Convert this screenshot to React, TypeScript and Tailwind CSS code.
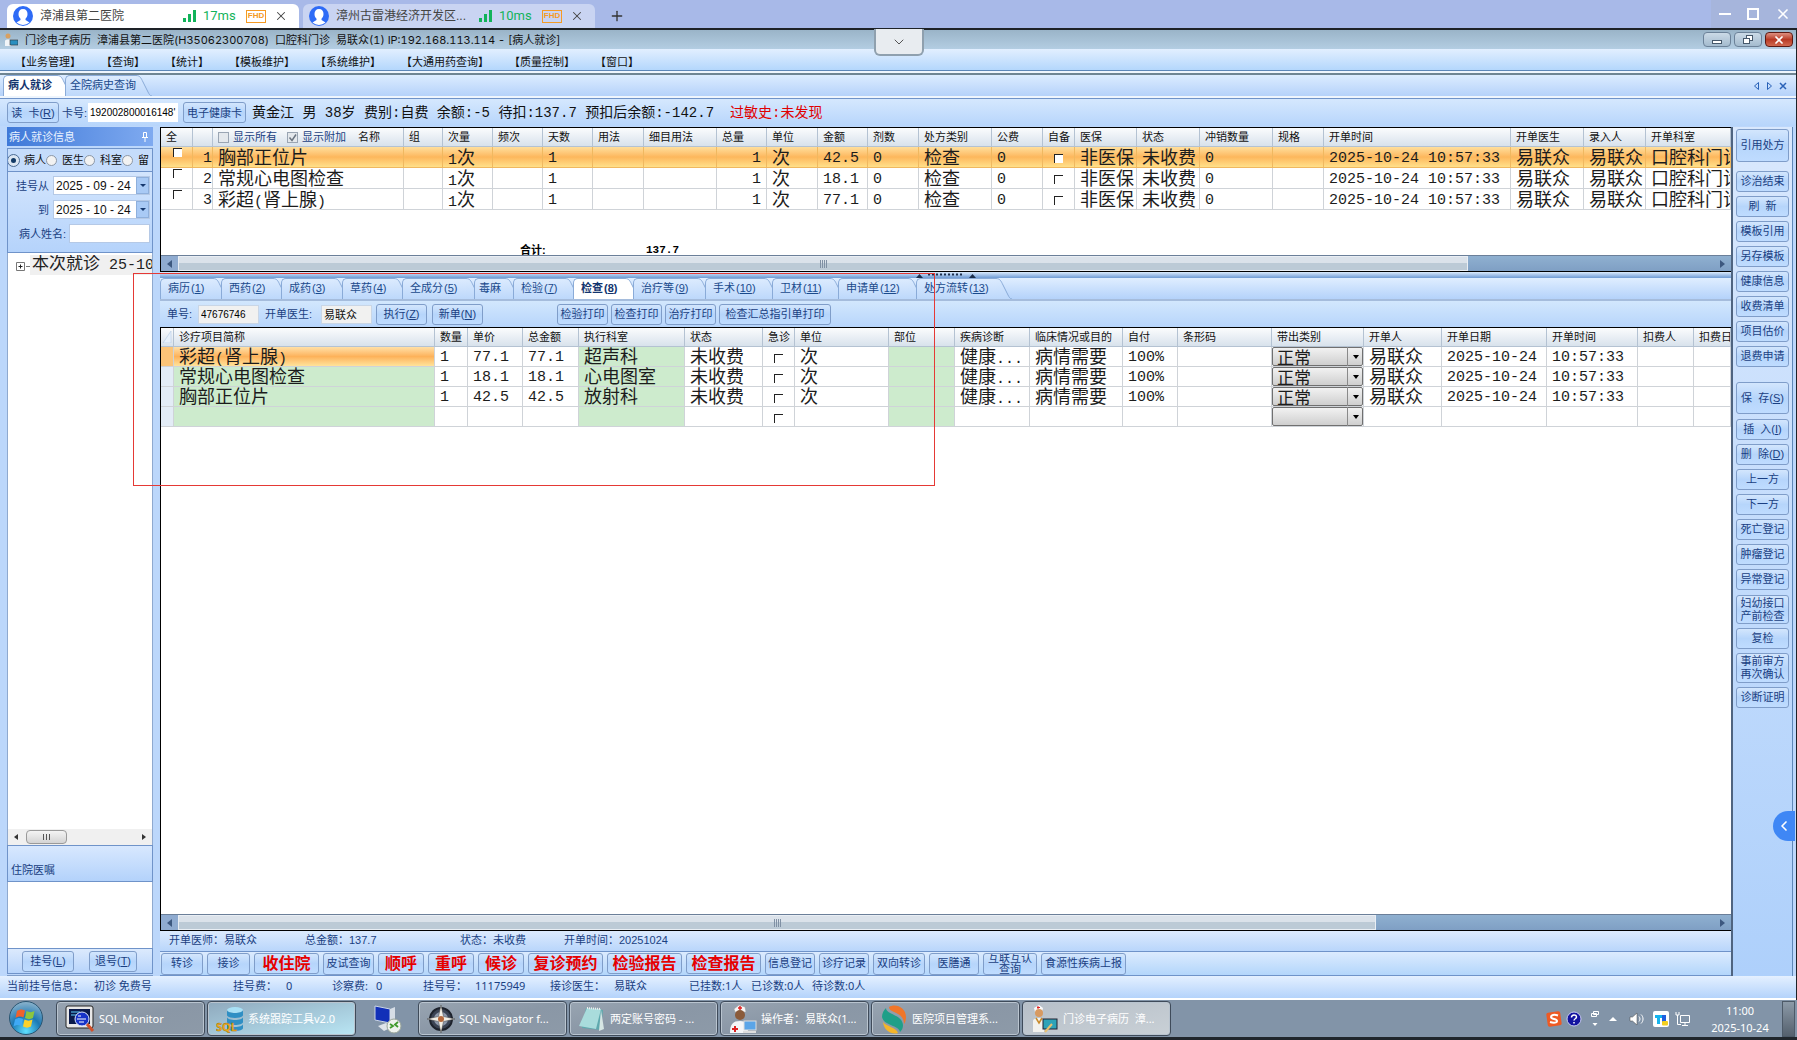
import type { ReactNode } from 'react'
import { ChevronDown, ChevronLeft, Plus, X } from 'lucide-react'
import clsx from 'clsx'

const MENU = ['业务管理', '查询', '统计', '模板维护', '系统维护', '大通用药查询', '质量控制', '窗口']

const ORDER_COLS = [
  { label: '全', w: 'w-[32px]' },
  { label: '', w: 'w-[20px]' },
  { label: '名称', w: 'w-[191px]' },
  { label: '组', w: 'w-[39px]' },
  { label: '次量', w: 'w-[50px]' },
  { label: '频次', w: 'w-[50px]' },
  { label: '天数', w: 'w-[50px]' },
  { label: '用法', w: 'w-[51px]' },
  { label: '细目用法', w: 'w-[73px]' },
  { label: '总量', w: 'w-[50px]' },
  { label: '单位', w: 'w-[51px]' },
  { label: '金额', w: 'w-[50px]' },
  { label: '剂数', w: 'w-[51px]' },
  { label: '处方类别', w: 'w-[73px]' },
  { label: '公费', w: 'w-[51px]' },
  { label: '自备', w: 'w-[32px]' },
  { label: '医保', w: 'w-[62px]' },
  { label: '状态', w: 'w-[63px]' },
  { label: '冲销数量', w: 'w-[73px]' },
  { label: '规格', w: 'w-[51px]' },
  { label: '开单时间', w: 'w-[187px]' },
  { label: '开单医生', w: 'w-[73px]' },
  { label: '录入人', w: 'w-[62px]' },
  { label: '开单科室', w: '' },
]

const ORDERS = [
  { name: '胸部正位片', price: '42.5' },
  { name: '常规心电图检查', price: '18.1' },
  { name: '彩超(肾上腺)', price: '77.1' },
]

const ITEM_COLS = [
  { label: '', w: 'w-[13px]' },
  { label: '诊疗项目简称', w: 'w-[261px]' },
  { label: '数量', w: 'w-[33px]' },
  { label: '单价', w: 'w-[55px]' },
  { label: '总金额', w: 'w-[56px]' },
  { label: '执行科室', w: 'w-[106px]' },
  { label: '状态', w: 'w-[78px]' },
  { label: '急诊', w: 'w-[32px]' },
  { label: '单位', w: 'w-[94px]' },
  { label: '部位', w: 'w-[66px]' },
  { label: '疾病诊断', w: 'w-[75px]' },
  { label: '临床情况或目的', w: 'w-[93px]' },
  { label: '自付', w: 'w-[55px]' },
  { label: '条形码', w: 'w-[94px]' },
  { label: '带出类别', w: 'w-[92px]' },
  { label: '开单人', w: 'w-[78px]' },
  { label: '开单日期', w: 'w-[105px]' },
  { label: '开单时间', w: 'w-[91px]' },
  { label: '扣费人', w: 'w-[56px]' },
  { label: '扣费日期', w: '' },
]

const ITEMS = [
  { name: '彩超(肾上腺)', price: '77.1', dept: '超声科' },
  { name: '常规心电图检查', price: '18.1', dept: '心电图室' },
  { name: '胸部正位片', price: '42.5', dept: '放射科' },
  null,
]

const TABS = [
  { label: '病历', k: '1', w: 'w-[61px]' },
  { label: '西药', k: '2', w: 'w-[60px]' },
  { label: '成药', k: '3', w: 'w-[61px]' },
  { label: '草药', k: '4', w: 'w-[60px]' },
  { label: '全成分', k: '5', w: 'w-[72px]' },
  { label: '毒麻', k: '', w: 'w-[39px]' },
  { label: '检验', k: '7', w: 'w-[60px]' },
  { label: '检查', k: '8', w: 'w-[60px]' },
  { label: '治疗等', k: '9', w: 'w-[72px]' },
  { label: '手术', k: '10', w: 'w-[67px]' },
  { label: '卫材', k: '11', w: 'w-[66px]' },
  { label: '申请单', k: '12', w: 'w-[78px]' },
  { label: '处方流转', k: '13', w: 'w-[88px]' },
]

const ACTIONS = [
  { label: '转诊', w: 'w-[42px]' },
  { label: '接诊', w: 'w-[43px]' },
  { label: '收住院', w: 'w-[65px]', hot: true },
  { label: '皮试查询', w: 'w-[51px]' },
  { label: '顺呼', w: 'w-[46px]', hot: true },
  { label: '重呼', w: 'w-[46px]', hot: true },
  { label: '候诊', w: 'w-[46px]', hot: true },
  { label: '复诊预约', w: 'w-[75px]', hot: true },
  { label: '检验报告', w: 'w-[75px]', hot: true },
  { label: '检查报告', w: 'w-[75px]', hot: true },
  { label: '信息登记', w: 'w-[50px]' },
  { label: '诊疗记录', w: 'w-[50px]' },
  { label: '双向转诊', w: 'w-[52px]' },
  { label: '医膳通', w: 'w-[50px]' },
  { label: '互联互认\n查询', w: 'w-[54px]' },
  { label: '食源性疾病上报', w: 'w-[85px]' },
]

const SIDE: { label: ReactNode; cls: string }[] = [
  { label: '引用处方', cls: 'h-[33px] mb-[9px]' },
  { label: '诊治结束', cls: 'h-[21px] mb-1' },
  { label: '刷  新', cls: 'h-[21px] mb-1' },
  { label: '模板引用', cls: 'h-[21px] mb-1' },
  { label: '另存模板', cls: 'h-[21px] mb-1' },
  { label: '健康信息', cls: 'h-[21px] mb-1' },
  { label: '收费清单', cls: 'h-[21px] mb-1' },
  { label: '项目估价', cls: 'h-[21px] mb-1' },
  { label: '退费申请', cls: 'h-[21px] mb-[15px]' },
  { label: <>保  存<Key k="S" /></>, cls: 'h-[32px] mb-[5px]' },
  { label: <>插  入<Key k="I" /></>, cls: 'h-[21px] mb-1' },
  { label: <>删  除<Key k="D" /></>, cls: 'h-[21px] mb-1' },
  { label: '上一方', cls: 'h-[21px] mb-1' },
  { label: '下一方', cls: 'h-[21px] mb-1' },
  { label: '死亡登记', cls: 'h-[21px] mb-1' },
  { label: '肿瘤登记', cls: 'h-[21px] mb-1' },
  { label: '异常登记', cls: 'h-[21px] mb-[5px]' },
  { label: '妇幼接口\n产前检查', cls: 'h-[29px] mb-1' },
  { label: '复检', cls: 'h-[21px] mb-1' },
  { label: '事前审方\n再次确认', cls: 'h-[30px] mb-1' },
  { label: '诊断证明', cls: 'h-[21px]' },
]

function Key({ k }: { k: string }) {
  return (
    <span>
      (<u>{k}</u>)
    </span>
  )
}

/* grid text: latin runs are set a little smaller than the hanzi */
function Mix({ t }: { t?: string }) {
  if (!t) return null
  return (
    <>
      {t.split(/([\x20-\x7e]+)/).map((part, i) =>
        i % 2 ? <span key={i} className="text-[15px] leading-[0px]">{part}</span> : part,
      )}
    </>
  )
}

function Btn({ className, children }: { className?: string; children: ReactNode }) {
  return (
    <button
      type="button"
      className={clsx(
        'flex shrink-0 items-center justify-center overflow-hidden rounded-[3px] border border-[#7f9dc9] bg-gradient-to-b from-[#d3e6fd] via-[#b6d5fb] to-[#bfdcff] whitespace-pre text-[#1a3f82]',
        className,
      )}
    >
      {children}
    </button>
  )
}

function Check({ label }: { label: string }) {
  return (
    <input
      type="checkbox"
      aria-label={label}
      className="block size-[9px] appearance-none border-t border-l border-[#222] bg-white"
    />
  )
}

function SlantTab({ w, active, small, children }: { w: string; active?: boolean; small?: boolean; children: ReactNode }) {
  return (
    <button
      type="button"
      role="tab"
      aria-selected={!!active}
      className={clsx('flex h-[21px] shrink-0 text-[#1a4a8c]', w, active && 'font-bold text-[#12346e]')}
    >
      <span
        className={clsx(
          'flex h-full flex-1 items-center rounded-tl-[5px] border-t border-l border-[#8aabd8] pb-0.5 whitespace-nowrap',
          small ? 'pl-[4px]' : 'pl-[7px]',
          active ? 'bg-white' : 'bg-gradient-to-b from-[#dcebfe] to-[#bdd8fb]',
        )}
      >
        {children}
      </span>
      <svg viewBox="0 0 16 21" className="-mr-2 h-[21px] w-4 shrink-0" aria-hidden>
        <defs>
          <linearGradient id="slant" x1="0" y1="0" x2="0" y2="1">
            <stop offset="0" stopColor="#dcebfe" />
            <stop offset="1" stopColor="#bdd8fb" />
          </linearGradient>
        </defs>
        <path d="M0 0.5C4 0.5 5 3 7 7l5 10c1 2 2 4 4 4H0z" fill={active ? '#fff' : 'url(#slant)'} />
        <path d="M0 0.5C4 0.5 5 3 7 7l5 10c1 2 2 4 4 4" fill="none" stroke="#8aabd8" />
      </svg>
    </button>
  )
}

function HScroll({ thumb }: { thumb: string }) {
  return (
    <div className="flex h-4 shrink-0 border-t border-[#6b7f99] bg-gradient-to-b from-[#8fb0d0] to-[#7f9fc4]">
      <div className="flex w-[17px] items-center justify-center bg-[#8fabd0]">
        <span className="border-y-4 border-r-[5px] border-y-transparent border-r-[#3d587f]" />
      </div>
      <div className="flex flex-1">
        <div
          className={clsx(
            'flex items-center justify-center gap-px border border-[#e9eef4] bg-gradient-to-b from-[#dbe2ea] from-50% to-[#bccad6] to-50%',
            thumb,
          )}
        >
          {[0, 1, 2, 3].map(i => (
            <span key={i} className="h-2 w-px bg-[#8090a4]" />
          ))}
        </div>
      </div>
      <div className="flex w-[17px] items-center justify-center">
        <span className="border-y-4 border-l-[5px] border-y-transparent border-l-[#3d587f]" />
      </div>
    </div>
  )
}

/* remote-desktop client tabs */
function SessionTab({ name, ms, active }: { name: string; ms: string; active?: boolean }) {
  return (
    <div
      className={clsx(
        'mr-1 flex h-6 w-[292px] items-center rounded-t-md pl-1.5 text-xs text-[#444]',
        active ? 'bg-white' : 'bg-[#c9d4f2]',
      )}
    >
      <svg viewBox="0 0 20 20" className="size-5">
        <circle cx="10" cy="10" r="10" fill="#2e6bf6" />
        <path d="M10 3c3 0 4.500 2 4.500 5 0 2-.8 3.700-2 4.700v1.300l4 2.500A10 10 0 0 1 3.500 16.500l4-2.500v-1.300c-1.200-1-2-2.700-2-4.700 0-3 1.500-5 4.500-5z" fill="#fff" />
      </svg>
      <span className="ml-[7px] w-[143px] whitespace-nowrap">{name}</span>
      <svg viewBox="0 0 14 12" className="h-3 w-3.5" fill="#12b35a">
        <path d="M0 8h3v4H0zM5 4h3v8H5zM10 0h3v12h-3z" />
      </svg>
      <span className="ml-1.5 w-[43px] font-[Roboto] text-[13px] text-[#12b35a]">{ms}</span>
      <span className="flex h-[13px] w-5 items-center justify-center border border-[#f59a23] text-[8px] leading-none font-bold text-[#f59a23]">
        FHD
      </span>
      <button type="button" aria-label="关闭" className="ml-2">
        <X className="size-3.5" strokeWidth={1.8} />
      </button>
    </div>
  )
}

function TitleBar() {
  return (
    <header className="flex h-[19px] shrink-0 items-center bg-gradient-to-b from-[#9ab4c8] to-[#b3cde2] pl-1">
      <svg viewBox="0 0 14 14" className="size-3.5">
        <circle cx="4" cy="3" r="2.500" fill="#d8a060" />
        <path d="M1 13V8c0-2 6-2 6 0v5z" fill="#f2f5f8" />
        <rect x="6" y="7" width="8" height="5" fill="#2a8fc0" stroke="#333" strokeWidth=".6" />
      </svg>
      <h1 className="ml-[7px] flex-1 whitespace-pre text-[11px] tabular-nums text-[#111] [font-family:'Inter','Noto_Sans_CJK_SC',sans-serif]">
        {'门诊电子病历  漳浦县第二医院(H35062300708)  口腔科门诊  易联众(1) IP:192.168.113.114 - [病人就诊]'}
      </h1>
      <div className="flex gap-[3px] pr-[3px]">
        <button type="button" aria-label="最小化" className="flex h-[15px] w-7 items-center justify-center rounded-sm border border-[#6c8299] bg-gradient-to-b from-[#cbdae7] to-[#a4bbce]">
          <span className="mt-1 h-1 w-2.5 border border-[#46586b] bg-white" />
        </button>
        <button type="button" aria-label="还原" className="flex h-[15px] w-7 items-center justify-center rounded-sm border border-[#6c8299] bg-gradient-to-b from-[#cbdae7] to-[#a4bbce]">
          <svg viewBox="0 0 12 10" className="h-2.5 w-3" fill="#fff" stroke="#46586b">
            <rect x="4.500" y=".5" width="6" height="5" />
            <rect x="1.500" y="3.500" width="6" height="5" />
          </svg>
        </button>
        <button type="button" aria-label="关闭窗口" className="flex h-[15px] w-7 items-center justify-center rounded-sm border border-[#5c1a14] bg-gradient-to-b from-[#dd8f80] via-[#b83a25] to-[#d2694f]">
          <X className="size-3 text-white" strokeWidth={3.5} />
        </button>
      </div>
    </header>
  )
}

function PatientPanel() {
  return (
    <aside className="flex w-[146px] shrink-0 flex-col overflow-hidden border-b border-[#7f9dc9] pb-px">
      <h2 className="flex h-[19px] shrink-0 items-center justify-between bg-gradient-to-r from-[#3f79d8] to-[#7faaf0] px-0.5 text-[#eaf3ff]">
        病人就诊信息
        <svg viewBox="0 0 8 10" className="mr-0.5 h-2.5 w-2" stroke="#fff" fill="none">
          <path d="M2.500 0.500h3v5h-3zM1 5.500h6M4 6v4" />
        </svg>
      </h2>
      <fieldset className="mt-0.5 flex h-6 shrink-0 items-center overflow-hidden border border-[#6f93c9] bg-[#c5dcfb] text-[#111]">
        {['病人', '医生', '科室', '留'].map((label, i) => (
          <label key={label} className="flex shrink-0 items-center gap-[5px]">
            <input
              type="radio"
              name="scope"
              defaultChecked={i === 0}
              className="size-[11px] appearance-none rounded-full border border-[#8c97a6] bg-[#f2f2f2] checked:border-[3px] checked:border-[#dbe6f2] checked:bg-[#123a66] checked:outline checked:outline-[#4d6c92]"
            />
            {label}
          </label>
        ))}
      </fieldset>
      <div className="flex h-[81px] shrink-0 flex-col gap-[5px] border-x border-b border-[#6f93c9] bg-gradient-to-b from-[#d3e5fd] to-[#b5d3fb] pt-1 pr-0.5">
        {[
          ['挂号从', '2025 - 09 - 24'],
          ['到', '2025 - 10 - 24'],
        ].map(([label, date]) => (
          <label key={label} className="flex items-center justify-end gap-1 text-[#1a3f82]">
            {label}
            <span className="flex h-[19px] w-[97px] border border-[#b5c9e6] bg-white">
              <input type="text" defaultValue={date} className="w-[82px] pl-0.5 text-xs text-[#111] outline-none" />
              <span className="flex w-[13px] items-center justify-center border border-[#8fb0dc] bg-[#a9caf5]">
                <span className="border-x-[3px] border-t-[3px] border-x-transparent border-t-[#16386e]" />
              </span>
            </span>
          </label>
        ))}
        <label className="flex items-center justify-end gap-[3px] text-[#1a3f82]">
          病人姓名:
          <input type="text" className="h-[19px] w-[81px] border border-[#b5c9e6] bg-white outline-none" />
        </label>
      </div>
      <div className="flex min-h-0 flex-1 flex-col border-x border-[#8fa9cf] bg-white">
        <div className="flex flex-1 items-start pt-0.5 pl-2">
          <svg viewBox="0 0 14 19" className="h-[19px] w-3.5 shrink-0" stroke="#777" fill="none">
            <path d="M.5 7.500h8v8h-8zM10 11.500h4" />
            <path d="M2.500 11.500h4M4.500 9.500v4" stroke="#222" />
          </svg>
          <span className="w-full overflow-hidden bg-[#f0f0f0] pl-0.5 text-[17px] leading-[20px] whitespace-nowrap text-[#222] [font-family:'Liberation_Mono','Noto_Sans_CJK_SC',monospace]">
            <Mix t="本次就诊 25-10" />
          </span>
        </div>
        <div className="flex h-4 items-center bg-[#f0f0f0] px-1.5">
          <span className="border-y-[3px] border-r-4 border-y-transparent border-r-[#333]" />
          <div className="ml-2 flex h-3.5 w-[41px] items-center justify-center gap-0.5 rounded-sm border border-[#9a9a9a] bg-gradient-to-b from-[#f4f4f4] to-[#d4d4d4]">
            <i className="h-1.5 w-px bg-[#555]" />
            <i className="h-1.5 w-px bg-[#555]" />
            <i className="h-1.5 w-px bg-[#555]" />
          </div>
          <span className="ml-auto border-y-[3px] border-l-4 border-y-transparent border-l-[#333]" />
        </div>
      </div>
      <h3 className="flex h-[37px] shrink-0 items-end border border-[#6f93c9] bg-gradient-to-b from-[#d8e8fe] to-[#b3d2fb] pb-1 pl-[3px] text-[#1a3f82]">
        住院医嘱
      </h3>
      <div className="h-[66px] shrink-0 border-x border-[#8fa9cf] bg-white" />
      <div className="flex h-[26px] shrink-0 items-center gap-[15px] border border-[#6f93c9] bg-gradient-to-b from-[#dceafd] to-[#b7d4fb] pl-[14px]">
        <Btn className="h-[21px] w-[52px]">挂号<Key k="L" /></Btn>
        <Btn className="h-[21px] w-[48px]">退号<Key k="T" /></Btn>
      </div>
    </aside>
  )
}

const TH = 'h-[19px] overflow-hidden border-r border-b border-[#b4c2d2] bg-gradient-to-b from-[#fbfcfd] to-[#d8e2ec] p-0 pl-[5px] text-left text-[11px] leading-[18px] font-normal whitespace-nowrap text-[#111]'
const CELLS = "[&_td]:overflow-hidden [&_td]:border-r [&_td]:border-b [&_td]:border-[#cfd3d8] [&_td]:p-0 [&_td]:pt-[3px] [&_td]:pl-[5px] [&_td]:whitespace-nowrap text-lg leading-[16px] text-[#1c1c1c] [font-family:'Liberation_Mono','Noto_Sans_CJK_SC',monospace]"
const NUM = 'text-[15px]'

function OrderGrid() {
  return (
    <section className="flex h-[145px] shrink-0 flex-col overflow-hidden border-y border-l border-black bg-white">
      <table className="w-full table-fixed border-separate border-spacing-0">
        <thead>
          <tr>
            {ORDER_COLS.map((c, i) => (
              <th key={i} className={clsx(TH, c.w)}>
                {i === 2 ? (
                  <span className="flex items-center">
                    <label className="flex items-center gap-1 text-[#1a3f82]">
                      <input type="checkbox" className="size-[11px] appearance-none border border-[#9aa5b3] bg-[#e4e8ec]" />
                      显示所有
                    </label>
                    <label className="relative ml-2.5 flex items-center gap-1 text-[#1a3f82]">
                      <input type="checkbox" defaultChecked className="size-[11px] appearance-none border border-[#9aa5b3] bg-[#e4e8ec]" />
                      <svg viewBox="0 0 11 11" className="pointer-events-none absolute left-0 size-[11px]" fill="none" stroke="#6a7480" strokeWidth="1.500">
                        <path d="M2.500 5.500l2.500 3 4-6" />
                      </svg>
                      显示附加
                    </label>
                    <span className="ml-3">名称</span>
                  </span>
                ) : (
                  c.label
                )}
              </th>
            ))}
          </tr>
        </thead>
        <tbody className={CELLS}>
          {ORDERS.map((o, i) => (
            <tr
              key={o.name}
              className={clsx(
                'h-[21px]',
                i === 0 && '[&_td]:border-[#f0b860]! [&_td]:bg-gradient-to-b [&_td]:from-[#ffdf9c] [&_td]:via-[#fdb75c] [&_td]:to-[#ffe08a]',
              )}
            >
              <td className="pt-px! pl-[12px]! align-top"><Check label={`选择 ${o.name}`} /></td>
              <td className={clsx(NUM, 'pr-1 pl-0! text-right')}>{i + 1}</td>
              <td><Mix t={o.name} /></td>
              <td />
              <td><Mix t="1次" /></td>
              <td />
              <td className={NUM}>1</td>
              <td />
              <td />
              <td className={clsx(NUM, 'pr-[5px]! text-right')}>1</td>
              <td>次</td>
              <td className={NUM}>{o.price}</td>
              <td className={NUM}>0</td>
              <td>检查</td>
              <td className={NUM}>0</td>
              <td className="pl-[11px]!"><Check label={`自备 ${o.name}`} /></td>
              <td>非医保</td>
              <td>未收费</td>
              <td className={NUM}>0</td>
              <td />
              <td className={NUM}>2025-10-24 10:57:33</td>
              <td>易联众</td>
              <td>易联众</td>
              <td>口腔科门诊</td>
            </tr>
          ))}
        </tbody>
      </table>
      <p className="mt-auto flex pl-[359px] text-[11px] leading-[10px] font-bold text-black">
        <span className="w-[126px]">合计:</span>
        <span className="[font-family:'Liberation_Mono',monospace]">137.7</span>
      </p>
      <HScroll thumb="w-[84%]" />
    </section>
  )
}

function ItemGrid() {
  return (
    <section className="flex min-h-0 flex-1 flex-col overflow-hidden border-y border-l border-black bg-white">
      <table className="w-full table-fixed border-separate border-spacing-0">
        <thead>
          <tr>
            {ITEM_COLS.map((c, i) => (
              <th key={i} className={clsx(TH, c.w)}>
                {i === 0 ? (
                  <svg viewBox="0 0 8 12" className="-ml-1 h-3 w-2.5" fill="#e8f1fb">
                    <path d="M8 0v12H0z" stroke="#a9c2e0" strokeWidth=".5" />
                  </svg>
                ) : (
                  c.label
                )}
              </th>
            ))}
          </tr>
        </thead>
        <tbody className={CELLS}>
          {ITEMS.map((r, i) => (
            <tr key={i} className="h-[20px]">
              <td className={i === 0 ? 'bg-[#fcc478]' : 'bg-[#e3ecf6]'} />
              <td className={i === 0 ? 'bg-gradient-to-b from-[#ffe0a6] via-[#fdb25a] to-[#ffe39a]' : 'bg-[#cdebcd]'}>
                <Mix t={r?.name} />
              </td>
              <td className={NUM}>{r && '1'}</td>
              <td className={NUM}>{r?.price}</td>
              <td className={NUM}>{r?.price}</td>
              <td className="bg-[#cdebcd]">{r?.dept}</td>
              <td>{r && '未收费'}</td>
              <td className="pl-[11px]!"><Check label="急诊" /></td>
              <td>{r && '次'}</td>
              <td className="bg-[#cdebcd]" />
              <td>{r && <Mix t="健康..." />}</td>
              <td>{r && '病情需要'}</td>
              <td className={NUM}>{r && '100%'}</td>
              <td />
              <td className="relative p-0!">
                <select
                  aria-label="带出类别"
                  defaultValue={r ? '正常' : ''}
                  className="block h-[19px] w-full appearance-none rounded-[2px] border border-[#707070] bg-gradient-to-b from-[#f2f2f2] to-[#cfcfcf] pl-1 text-[17px] leading-[17px] outline-none [font-family:'Noto_Sans_CJK_SC',sans-serif]"
                >
                  <option value="" />
                  <option>正常</option>
                </select>
                <span className="pointer-events-none absolute inset-y-0 right-0 flex w-4 items-center justify-center border-l border-[#8a8a8a]">
                  <span className="border-x-[3px] border-t-4 border-x-transparent border-t-black" />
                </span>
              </td>
              <td>{r && '易联众'}</td>
              <td className={NUM}>{r && '2025-10-24'}</td>
              <td className={NUM}>{r && '10:57:33'}</td>
              <td />
              <td />
            </tr>
          ))}
        </tbody>
      </table>
      <div className="flex-1" />
      <HScroll thumb="w-[78%]" />
    </section>
  )
}

function OrderTabs() {
  return (
    <>
      <div className="flex h-[6px] shrink-0 items-center justify-center bg-gradient-to-b from-[#dcebfd] to-[#6f9bd4]">
        <svg viewBox="0 0 60 5" className="h-[5px] w-[60px]" fill="#1c2f4d">
          <path d="M0 5l3.500-4L7 5zM53 5l3.500-4L60 5z" />
          <path d="M12 1.500h36" stroke="#1c2f4d" strokeWidth="2" strokeDasharray="2 2" />
        </svg>
      </div>
      <div role="tablist" className="flex h-[23px] shrink-0 items-end border-b-2 border-[#a5bcdc] bg-gradient-to-b from-[#e0eeff] to-[#b4d2fa]">
        {TABS.map(t => (
          <SlantTab key={t.label} w={t.w} active={t.k === '8'} small={!t.k}>
            {t.label}
            {t.k && <span className="ml-px"><Key k={t.k} /></span>}
          </SlantTab>
        ))}
      </div>
      <div className="flex h-[26px] shrink-0 items-center bg-gradient-to-b from-[#d2e7fd] to-[#b7d5fb] pl-[7px] text-[#1a3f82]">
        <label className="flex items-center">
          <span className="w-[31px]">单号:</span>
          <input type="text" defaultValue="47676746" className="h-[19px] w-[61px] border border-[#c9d6e6] bg-[#f1f1f0] pl-0.5 text-[10px] text-black outline-none" />
        </label>
        <label className="ml-[6px] flex items-center">
          <span className="w-[56px]">开单医生:</span>
          <input type="text" defaultValue="易联众" className="h-[19px] w-[51px] border border-[#c9d6e6] bg-[#f1f1f0] pl-0.5 text-[#111] outline-none" />
        </label>
        <Btn className="ml-[4px] h-[21px] w-[51px]">执行<Key k="Z" /></Btn>
        <Btn className="ml-[5px] h-[21px] w-[51px]">新单<Key k="N" /></Btn>
        <div className="ml-[74px] flex gap-[3px]">
          <Btn className="h-[21px] w-[51px]">检验打印</Btn>
          <Btn className="h-[21px] w-[51px]">检查打印</Btn>
          <Btn className="h-[21px] w-[51px]">治疗打印</Btn>
          <Btn className="h-[21px] w-[112px]">检查汇总指引单打印</Btn>
        </div>
      </div>
    </>
  )
}

function BottomBars() {
  return (
    <>
      <dl className="flex h-[21px] shrink-0 items-center border-b border-[#6f93c9] bg-gradient-to-b from-[#dceafd] to-[#b9d6fb] pb-[3px] pl-[9px] text-[#1a3f82]">
        {[
          ['开单医师', '易联众', 'w-[136px]'],
          ['总金额', '137.7', 'w-[155px]'],
          ['状态', '未收费', 'w-[104px]'],
          ['开单时间', '20251024', 'w-[120px]'],
        ].map(([k, v, w]) => (
          <div key={k} className={clsx('flex', w)}>
            <dt>{k}：</dt>
            <dd>{v}</dd>
          </div>
        ))}
      </dl>
      <div className="flex h-[24px] shrink-0 items-center gap-1 border-b border-[#6f93c9] bg-gradient-to-b from-[#dcebfe] to-[#b3d6fb] pl-px">
        {ACTIONS.map(a => (
          <Btn
            key={a.label}
            className={clsx(a.w, a.hot ? 'h-[21px] text-base leading-none font-bold text-[#e60000]!' : 'h-[22px] leading-[11px]')}
          >
            {a.label}
          </Btn>
        ))}
      </div>
    </>
  )
}

/* taskbar glyphs */
const ICONS = {
  monitor: (
    <svg viewBox="0 0 30 30" className="size-[30px] shrink-0">
      <rect x="1" y="2" width="27" height="22" rx="2" fill="#e8e8e8" stroke="#222" />
      <rect x="4" y="5" width="21" height="15" fill="#0a1a4a" />
      <path d="M6 8h9M6 11h6" stroke="#5fd0ff" />
      <circle cx="17" cy="15" r="7" fill="#1733c8" stroke="#dfe8ff" />
      <path d="M13 12h3M12 15h9M14 18h5" stroke="#fff" />
      <path d="M22 20l6 7" stroke="#d0512b" strokeWidth="3" />
    </svg>
  ),
  trace: (
    <svg viewBox="0 0 28 28" className="size-7 shrink-0">
      <ellipse cx="19" cy="5" rx="8" ry="3" fill="#a8e0f5" />
      <path d="M11 5v5c0 4 16 4 16 0V5c0 4-16 4-16 0zM11 12v5c0 4 16 4 16 0v-5c0 4-16 4-16 0zM11 19v4c0 4 16 4 16 0v-4c0 4-16 4-16 0z" fill="#2f8fc4" />
      <text x="0" y="26" fontSize="11" fontWeight="bold" fill="#f6b21b" stroke="#a86a00" strokeWidth=".4">SQL</text>
    </svg>
  ),
  compass: (
    <svg viewBox="0 0 28 28" className="size-7 shrink-0">
      <circle cx="14" cy="14" r="11" fill="#3a4252" stroke="#1d222c" strokeWidth="2" />
      <circle cx="14" cy="14" r="7" fill="#8d98ab" />
      <path d="M14 0l2.500 11.500L28 14l-11.500 2.500L14 28l-2.500-11.500L0 14l11.500-2.500z" fill="#f3efe6" stroke="#444" strokeWidth=".5" />
      <circle cx="14" cy="14" r="3" fill="#b5683c" />
    </svg>
  ),
  note: (
    <svg viewBox="0 0 28 28" className="size-7 shrink-0">
      <path d="M8 3l17 2-2 20-19-2z" fill="#5fa9ae" />
      <path d="M9 3l14 1-5 20-17-3z" fill="#a9dcdc" />
      <path d="M23 5l3 19-5 2z" fill="#d6e6e4" />
      <path d="M9 3l14 1" stroke="#eee" strokeWidth="2" strokeDasharray="1 1" />
    </svg>
  ),
  nurse: (
    <svg viewBox="0 0 28 30" className="h-[30px] w-7 shrink-0">
      <path d="M5 5l5-4 6 2 1 5H6z" fill="#f7f7f7" stroke="#999" strokeWidth=".5" />
      <path d="M11 2v4M9 4h4" stroke="#d22" strokeWidth="1.500" />
      <circle cx="11" cy="11" r="5" fill="#8a5b3a" />
      <path d="M1 29c0-9 3-12 10-12s8 4 8 12z" fill="#f4f6f8" />
      <path d="M6 22v6M3 25h6" stroke="#d22" strokeWidth="2" />
      <rect x="15" y="17" width="12" height="9" fill="#5aa5e8" stroke="#ddd" />
      <path d="M14 28h13" stroke="#ddd" strokeWidth="2" />
    </svg>
  ),
  swirl: (
    <svg viewBox="0 0 28 30" className="h-[30px] w-7 shrink-0">
      <path d="M9 3C15-1 26 3 26 13c0 3-1 6-2 7 0-8-6-10-10-12-3-1-5-3-5-5z" fill="#f0762a" />
      <path d="M6 4c0 7 16 6 17 17 0 3-1 5-3 7-1-7-16-6-18-15 0-4 2-7 4-9z" fill="#1f9f88" />
      <path d="M3 18c4 5 13 5 15 11-6 2-14-2-15-11z" fill="#f4b52a" />
    </svg>
  ),
  doctor: (
    <svg viewBox="0 0 28 30" className="h-[30px] w-7 shrink-0">
      <path d="M3 4l5-3 4 3-1 4H4z" fill="#fafafa" />
      <path d="M7 2v3M6 3.500h3" stroke="#d22" />
      <circle cx="8" cy="9" r="4" fill="#d79a62" />
      <path d="M2 28V17c0-4 11-4 11 0v11z" fill="#f2f2ee" />
      <path d="M5 14l3 5 3-5" stroke="#c88a2a" fill="none" strokeWidth="1.500" />
      <rect x="12" y="15" width="14" height="10" fill="#2ea3b8" stroke="#223" />
      <path d="M14 28l7-8" stroke="#e8c070" strokeWidth="2" />
    </svg>
  ),
}

function TaskButton({ icon, label, tone }: { icon: ReactNode; label: string; tone?: 'active' | 'light' }) {
  return (
    <button
      type="button"
      className={clsx(
        'flex h-[35px] w-[149px] min-w-0 items-center gap-1 rounded-sm border border-[#3f4b5a] bg-gradient-to-br pl-2 whitespace-pre text-white shadow-[inset_0_0_0_1px_#b9c4cf]',
        tone === 'active' && 'from-[#8fa9bd] to-[#b9e6f4]',
        tone === 'light' && 'from-[#b6bfc8] to-[#c9d0d6]',
        !tone && 'from-[#98a4b1] via-[#8a97a6] to-[#8d9aa8]',
      )}
    >
      {icon}
      <span>{label}</span>
    </button>
  )
}

function Taskbar() {
  return (
    <footer className="flex h-10 shrink-0 items-start border-b-[3px] border-[#20262c] bg-[#8294a8] pt-px [font-family:'Noto_Sans','Noto_Sans_CJK_SC',sans-serif]">
      <button type="button" aria-label="开始" className="mr-[13px] ml-[9px]">
        <svg viewBox="0 0 34 34" className="size-[34px]">
          <defs>
            <radialGradient id="orb" cx=".5" cy=".9" r=".9">
              <stop offset="0" stopColor="#5fe0ff" />
              <stop offset=".5" stopColor="#1b78b4" />
              <stop offset="1" stopColor="#8eb4cc" />
            </radialGradient>
          </defs>
          <circle cx="17" cy="17" r="16.500" fill="url(#orb)" stroke="#2b5672" />
          <path d="M8 10c3-2 5-2 8-.5l-1.500 7c-3-1.500-5-1.500-8 .5z" fill="#f0622c" />
          <path d="M17.500 10c3 1.500 5 1.500 8 0l-1.500 7c-3 1.500-5 1.500-8 0z" fill="#8cc63f" />
          <path d="M6 18.500c3-2 5-2 8-.5l-1.500 7c-3-1.500-5-1.500-8 .5z" fill="#3fa9f5" />
          <path d="M15.500 18.500c3 1.500 5 1.500 8 0l-1.500 7c-3 1.500-5 1.500-8 0z" fill="#fcd12a" />
        </svg>
      </button>
      <div className="flex min-w-0 gap-[2px]">
        <TaskButton icon={ICONS.monitor} label="SQL Monitor" />
        <TaskButton icon={ICONS.trace} label="系统跟踪工具v2.0" tone="active" />
        <button type="button" aria-label="远程桌面" className="flex w-[58px] items-center justify-center">
          <svg viewBox="0 0 30 30" className="size-[30px]">
            <path d="M3 2l15 3v14L3 16z" fill="#1230b8" stroke="#c9d4e6" />
            <path d="M18 5l5-2v13l-5 3z" fill="#d6dde6" />
            <path d="M6 22l8-3 6 4-8 4z" fill="#dfe4ea" />
            <circle cx="22" cy="22" r="7" fill="#eef2ee" stroke="#9aa59a" />
            <path d="M18 20l3 2-3 2M26 18l-3 2.500 3 2.500" stroke="#3f9a2c" strokeWidth="1.800" fill="none" />
          </svg>
        </button>
        <TaskButton icon={ICONS.compass} label="SQL Navigator f..." />
        <TaskButton icon={ICONS.note} label="两定账号密码 - ..." />
        <TaskButton icon={ICONS.nurse} label="操作者：易联众(1..." />
        <TaskButton icon={ICONS.swirl} label="医院项目管理系..." />
        <TaskButton icon={ICONS.doctor} label="门诊电子病历  漳..." tone="light" />
      </div>
      <div className="ml-auto flex h-9 items-center text-white">
        <svg viewBox="0 0 16 16" className="size-4">
          <rect x="1" y="1" width="14" height="14" rx="2" fill="#ee5a24" transform="rotate(-8 8 8)" />
          <path d="M12 4.500c-4-1.500-7-.5-7 1.500 0 2.500 6 1.500 6 4 0 1.800-3 2.200-7 1" stroke="#fff" strokeWidth="2" fill="none" />
        </svg>
        <svg viewBox="0 0 16 16" className="ml-1 size-4">
          <circle cx="8" cy="8" r="7" fill="#1414a0" stroke="#c8ccf0" />
          <path d="M5.500 6.500c0-3.500 5-3.300 5-.5 0 1.700-2.500 1.800-2.500 3.500M8 11v1.500" stroke="#fff" strokeWidth="1.500" fill="none" />
        </svg>
        <svg viewBox="0 0 10 18" className="ml-2 h-[18px] w-2.5" fill="none" stroke="#fff">
          <path d="M3.500 1.500h5v3h-5zM1.500 3.500h5v3h-5z" />
          <path d="M2.500 13h5L5 16z" fill="#fff" stroke="none" />
        </svg>
        <span className="ml-[9px] border-x-4 border-b-4 border-x-transparent border-b-white" />
        <svg viewBox="0 0 16 14" className="ml-3 h-3.5 w-4">
          <path d="M1 5h2.500L8 1v12L3.500 9H1z" fill="#fff" stroke="#444" strokeWidth=".5" />
          <path d="M10 4.500c1.300 1.500 1.300 3.500 0 5M12 2.500c2.700 2.500 2.700 6.500 0 9" stroke="#fff" fill="none" />
        </svg>
        <svg viewBox="0 0 16 16" className="ml-2 size-4">
          <rect width="16" height="16" rx="2" fill="#fff" />
          <path d="M2 4h8v3H7v6H4V7H2z" fill="#16b4ee" />
          <path d="M9 4h4v8H9z" fill="#1f5fe0" />
          <rect x="9" y="10" width="6" height="4.500" rx="1" fill="#f4cf1f" />
        </svg>
        <svg viewBox="0 0 16 16" className="ml-1.5 size-4" fill="none" stroke="#fff">
          <path d="M5.500 4.500h9v7h-9zM7 14.500h6M10 12v2" />
          <path d="M1 1v3h3V1M2.500 4v9.500H6" />
        </svg>
        <time className="ml-[17px] w-[64px] text-center leading-[17px]">
          11:00
          <br />
          2025-10-24
        </time>
        <button type="button" aria-label="显示桌面" className="mr-0.5 ml-[10px] h-9 w-[13px] border border-[#4d5a68] bg-gradient-to-b from-[#8c9aa8] to-[#55616e]" />
      </div>
    </footer>
  )
}

export default function App() {
  return (
    <div className="relative flex h-screen flex-col overflow-hidden bg-[#bcd7fb] text-[11px] leading-[14px] [font-family:'Liberation_Sans','Noto_Sans_CJK_SC',sans-serif]">
      <nav className="flex h-7 shrink-0 items-center bg-[#a8b9e8] pt-1 pl-[7px]">
        <SessionTab name="漳浦县第二医院" ms="17ms" active />
        <SessionTab name="漳州古雷港经济开发区..." ms="10ms" />
        <button type="button" aria-label="新建" className="ml-2.5 text-[#333]">
          <Plus className="size-4" strokeWidth={2} />
        </button>
        <div className="-mt-1 ml-auto flex h-7 items-center gap-4 bg-[#a6b5dc] pr-1.5 pl-2 text-white">
          <span className="h-0.5 w-3 bg-white" />
          <span className="size-3 border-2 border-white" />
          <X className="size-4" strokeWidth={2.5} />
        </div>
      </nav>

      <div className="flex min-h-0 flex-1 flex-col border-t-2 border-r border-[#1e2227]">
        <TitleBar />
        <nav className="flex h-[22px] shrink-0 items-center gap-5 border-b border-[#5d87b8] bg-gradient-to-b from-[#e2efff] to-[#b4d7fc] pt-1 pl-[15px] text-[#111]">
          {MENU.map(m => (
            <a key={m} href="#" className="whitespace-nowrap">【{m}】</a>
          ))}
        </nav>
        <div className="h-1 shrink-0 border-t-2 border-b-2 border-t-[#eef5fd] border-b-[#6f8593]" />

        <div role="tablist" className="flex h-[23px] shrink-0 items-end border-b-2 border-[#eef5fd] bg-gradient-to-b from-[#dcecff] to-[#b5d2fa] pl-[3px]">
          <SlantTab w="w-[62px]" active small>病人就诊</SlantTab>
          <SlantTab w="w-[76px]" small>全院病史查询</SlantTab>
          <div className="mr-2 ml-auto flex gap-1 self-center text-[#1f57b0]">
            <svg viewBox="0 0 36 10" className="h-2.5 w-9" fill="none" stroke="#2a62b8">
              <path d="M6.500 1.500v7L2.500 5zM15.500 1.500v7l4-3.500z" />
              <path d="M28 2l6 6M34 2l-6 6" strokeWidth="1.500" />
            </svg>
          </div>
        </div>

        <div className="flex h-7 shrink-0 items-center border-t border-[#6f93c9] bg-gradient-to-b from-[#d5e8fe] to-[#b7d5fb] pl-[7px] text-[#1a3f82]">
          <Btn className="h-[21px] w-[52px]">读  卡<Key k="R" /></Btn>
          <label className="ml-[3px] flex items-center">
            <span className="w-[26px]">卡号:</span>
            <input type="text" defaultValue="192002800016148'" className="h-[19px] w-[90px] bg-white pl-0.5 text-[10px] text-black outline-none" />
          </label>
          <Btn className="ml-[5px] h-[21px] w-[63px]">电子健康卡</Btn>
          <p className="ml-[6px] text-sm whitespace-pre text-[#111] [font-family:'Liberation_Mono','Noto_Sans_CJK_SC',monospace]">
            黄金江 男 38岁 费别:自费 余额:-5 待扣:137.7 预扣后余额:-142.7
            <span className="ml-4 text-[#e00000]">过敏史:未发现</span>
          </p>
        </div>

        <main className="flex min-h-0 flex-1 pt-px pr-[3px] pl-[7px]">
          <PatientPanel />
          <div className="ml-[7px] flex min-w-0 flex-1 flex-col border-r-2 border-[#4f6480]">
            <OrderGrid />
            <OrderTabs />
            <ItemGrid />
            <BottomBars />
          </div>
          <aside className="flex w-[60px] shrink-0 flex-col items-center border-r border-[#5d87b8] bg-gradient-to-b from-[#d9e8fd] to-[#aed0fb] pt-0.5">
            {SIDE.map((s, i) => (
              <Btn key={i} className={clsx('w-[53px] leading-[13px]', s.cls)}>{s.label}</Btn>
            ))}
          </aside>
        </main>

        <div className="flex h-6 shrink-0 items-center border-b-2 border-white bg-gradient-to-b from-[#e4f0ff] to-[#b4d3fb] pb-0.5 pl-[7px] whitespace-nowrap text-[#1a3f82] [font-family:'Noto_Sans','Noto_Sans_CJK_SC',sans-serif]">
          <span className="w-[87px]">当前挂号信息：</span>
          <span className="w-[139px]">初诊 免费号</span>
          <span className="w-[53px]">挂号费：</span>
          <span className="w-[46px]">0</span>
          <span className="w-[44px]">诊察费:</span>
          <span className="w-[47px]">0</span>
          <span className="w-[52px]">挂号号：</span>
          <span className="w-[75px]">11175949</span>
          <span className="w-[64px]">接诊医生：</span>
          <span className="w-[75px]">易联众</span>
          <span className="w-[62px]">已挂数:1人</span>
          <span className="w-[61px]">已诊数:0人</span>
          <span>待诊数:0人</span>
        </div>
      </div>

      <Taskbar />

      {/* collapse handle of the remote session */}
      <button type="button" aria-label="展开工具栏" className="absolute top-[29px] left-1/2 flex h-[27px] w-[50px] -translate-x-1/2 items-center justify-center rounded-b-md border-2 border-t-0 border-[#8fa0ae] bg-[#e8ecf0]">
        <ChevronDown className="size-4 text-[#555]" strokeWidth={1.5} />
      </button>
      <button type="button" aria-label="展开侧栏" className="absolute top-[811px] right-0.5 flex h-[30px] w-[22px] items-center justify-center rounded-l-full bg-[#3f87f5] text-white">
        <ChevronLeft className="size-4" strokeWidth={2.5} />
      </button>
      {/* marked region */}
      <div className="pointer-events-none absolute top-[273px] left-[133px] h-[213px] w-[802px] border border-[#e53935]" />
    </div>
  )
}
